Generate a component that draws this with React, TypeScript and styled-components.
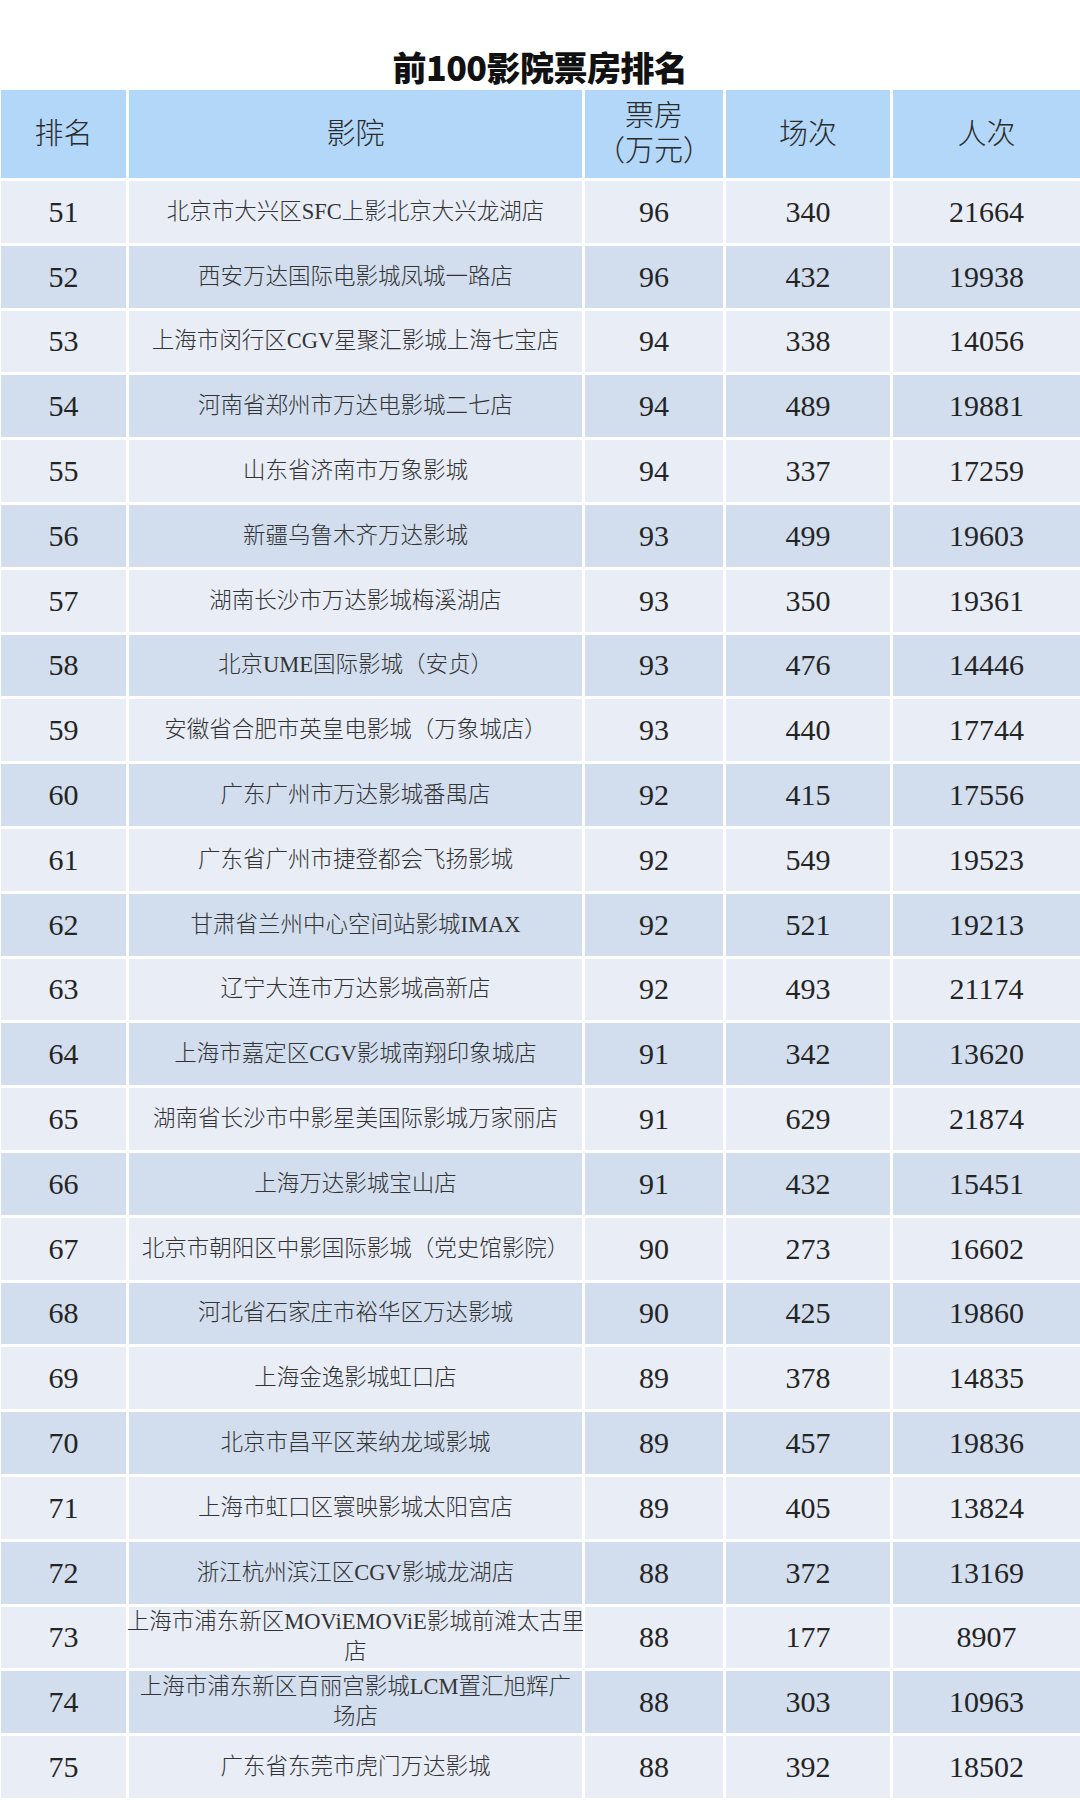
import React from "react";
import styled, { createGlobalStyle } from "styled-components";

const GlobalStyle = createGlobalStyle`
  html, body {
    margin: 0;
    padding: 0;
    background: #ffffff;
  }
  body {
    font-family: "Liberation Serif", "Noto Sans CJK SC", serif;
    -webkit-font-smoothing: antialiased;
  }
`;

const Page = styled.div`
  width: 1080px;
  background: #ffffff;
`;

const Title = styled.h1`
  margin: 0;
  padding-top: 47px;
  height: 40px;
  line-height: 40px;
  text-align: center;
  font-family: "Noto Sans CJK SC", "Noto Sans", sans-serif;
  font-weight: 900;
  font-size: 34px;
  color: #111111;
  letter-spacing: -0.5px;
`;

const Table = styled.div`
  margin-top: 3px;
  margin-left: 1px;
  display: grid;
  grid-template-columns: 125px 453px 138px 164px 1fr;
  grid-auto-rows: 61.8px;
  grid-template-rows: 88px;
  gap: 3px;
`;

const HeadCell = styled.div`
  background: #b3d7f8;
  display: flex;
  flex-direction: column;
  align-items: center;
  justify-content: center;
  text-align: center;
  font-family: "Liberation Serif", "Noto Sans CJK SC", serif;
  font-weight: 300;
  font-size: 29px;
  line-height: 35px;
  color: #2a2a2a;
`;

const Cell = styled.div<{ $tone: "light" | "dark"; $kind: "num" | "name" }>`
  background: ${(p) => (p.$tone === "light" ? "#e9edf6" : "#d2deee")};
  display: flex;
  flex-direction: column;
  align-items: center;
  justify-content: center;
  text-align: center;
  white-space: nowrap;
  color: ${(p) => (p.$kind === "num" ? "#242424" : "#333333")};
  font-family: "Liberation Serif", "Noto Sans CJK SC", serif;
  font-weight: 300;
  font-size: ${(p) => (p.$kind === "num" ? "30px" : "22.5px")};
  line-height: ${(p) => (p.$kind === "num" ? "36px" : "30px")};
`;

const Line = styled.span`
  display: block;
`;

type Row = [number, string[], number, number, number];

const rows: Row[] = [
  [51, ["北京市大兴区SFC上影北京大兴龙湖店"], 96, 340, 21664],
  [52, ["西安万达国际电影城凤城一路店"], 96, 432, 19938],
  [53, ["上海市闵行区CGV星聚汇影城上海七宝店"], 94, 338, 14056],
  [54, ["河南省郑州市万达电影城二七店"], 94, 489, 19881],
  [55, ["山东省济南市万象影城"], 94, 337, 17259],
  [56, ["新疆乌鲁木齐万达影城"], 93, 499, 19603],
  [57, ["湖南长沙市万达影城梅溪湖店"], 93, 350, 19361],
  [58, ["北京UME国际影城（安贞）"], 93, 476, 14446],
  [59, ["安徽省合肥市英皇电影城（万象城店）"], 93, 440, 17744],
  [60, ["广东广州市万达影城番禺店"], 92, 415, 17556],
  [61, ["广东省广州市捷登都会飞扬影城"], 92, 549, 19523],
  [62, ["甘肃省兰州中心空间站影城IMAX"], 92, 521, 19213],
  [63, ["辽宁大连市万达影城高新店"], 92, 493, 21174],
  [64, ["上海市嘉定区CGV影城南翔印象城店"], 91, 342, 13620],
  [65, ["湖南省长沙市中影星美国际影城万家丽店"], 91, 629, 21874],
  [66, ["上海万达影城宝山店"], 91, 432, 15451],
  [67, ["北京市朝阳区中影国际影城（党史馆影院）"], 90, 273, 16602],
  [68, ["河北省石家庄市裕华区万达影城"], 90, 425, 19860],
  [69, ["上海金逸影城虹口店"], 89, 378, 14835],
  [70, ["北京市昌平区莱纳龙域影城"], 89, 457, 19836],
  [71, ["上海市虹口区寰映影城太阳宫店"], 89, 405, 13824],
  [72, ["浙江杭州滨江区CGV影城龙湖店"], 88, 372, 13169],
  [73, ["上海市浦东新区MOViEMOViE影城前滩太古里", "店"], 88, 177, 8907],
  [74, ["上海市浦东新区百丽宫影城LCM置汇旭辉广", "场店"], 88, 303, 10963],
  [75, ["广东省东莞市虎门万达影城"], 88, 392, 18502],
];

export default function App() {
  return (
    <Page>
      <GlobalStyle />
      <Title>前100影院票房排名</Title>
      <Table>
        <HeadCell>排名</HeadCell>
        <HeadCell>影院</HeadCell>
        <HeadCell>
          <Line>票房</Line>
          <Line>（万元）</Line>
        </HeadCell>
        <HeadCell>场次</HeadCell>
        <HeadCell>人次</HeadCell>
        {rows.map(([rank, name, box, shows, people], i) => {
          const tone = i % 2 === 0 ? "light" : "dark";
          return (
            <React.Fragment key={rank}>
              <Cell $tone={tone} $kind="num">{rank}</Cell>
              <Cell $tone={tone} $kind="name">
                {name.map((l) => (
                  <Line key={l}>{l}</Line>
                ))}
              </Cell>
              <Cell $tone={tone} $kind="num">{box}</Cell>
              <Cell $tone={tone} $kind="num">{shows}</Cell>
              <Cell $tone={tone} $kind="num">{people}</Cell>
            </React.Fragment>
          );
        })}
      </Table>
    </Page>
  );
}
